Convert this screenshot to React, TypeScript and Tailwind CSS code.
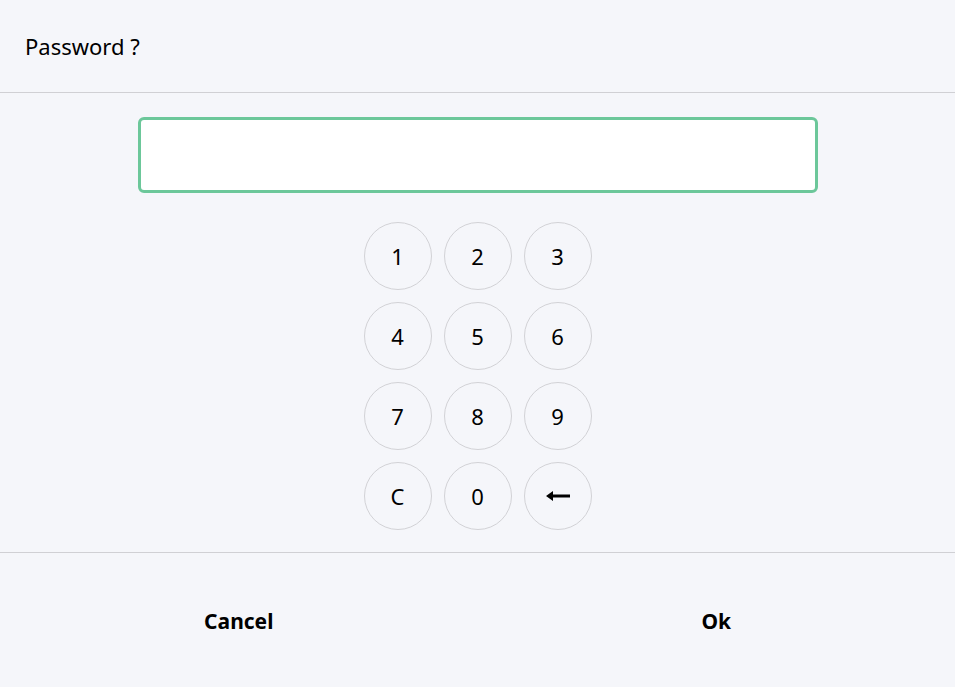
const keys = ["1", "2", "3", "4", "5", "6", "7", "8", "9", "C", "0", "back"];

const Key = ({ k }: { k: string }) => (
  <button className="w-[68px] h-[68px] rounded-full border border-[#d2d2d6] bg-transparent flex items-center justify-center text-[22px] text-black">
    {k === "back" ? (
      <svg width="26" height="12" viewBox="0 0 26 12">
        <path d="M1 6 L8 1 L8 4.5 L25 4.5 L25 7.5 L8 7.5 L8 11 Z" fill="#000" />
      </svg>
    ) : (
      k
    )}
  </button>
);

export default function App() {
  return (
    <div
      className="w-[955px] h-[687px] bg-[#f5f6fa] flex flex-col text-black"
      style={{ fontFamily: '"Noto Sans", "Open Sans", sans-serif' }}
    >
      <div className="h-[93px] flex items-center px-[25px] border-b border-[#d0d0d4] shrink-0">
        <span className="text-[22px]">Password ?</span>
      </div>
      <div className="flex flex-col items-center pt-[24px] pb-[22px] border-b border-[#d0d0d4]">
        <div className="w-[680px] h-[76px] bg-white border-[3px] border-[#6cc79a] rounded-[6px]" />
        <div className="grid grid-cols-3 gap-x-[12px] gap-y-[12px] mt-[29px]">
          {keys.map((k) => (
            <Key key={k} k={k} />
          ))}
        </div>
      </div>
      <div className="flex flex-1 pt-[4px]">
        <button className="flex-1 flex items-center justify-center text-[21px] font-bold">Cancel</button>
        <button className="flex-1 flex items-center justify-center text-[21px] font-bold">Ok</button>
      </div>
    </div>
  );
}
